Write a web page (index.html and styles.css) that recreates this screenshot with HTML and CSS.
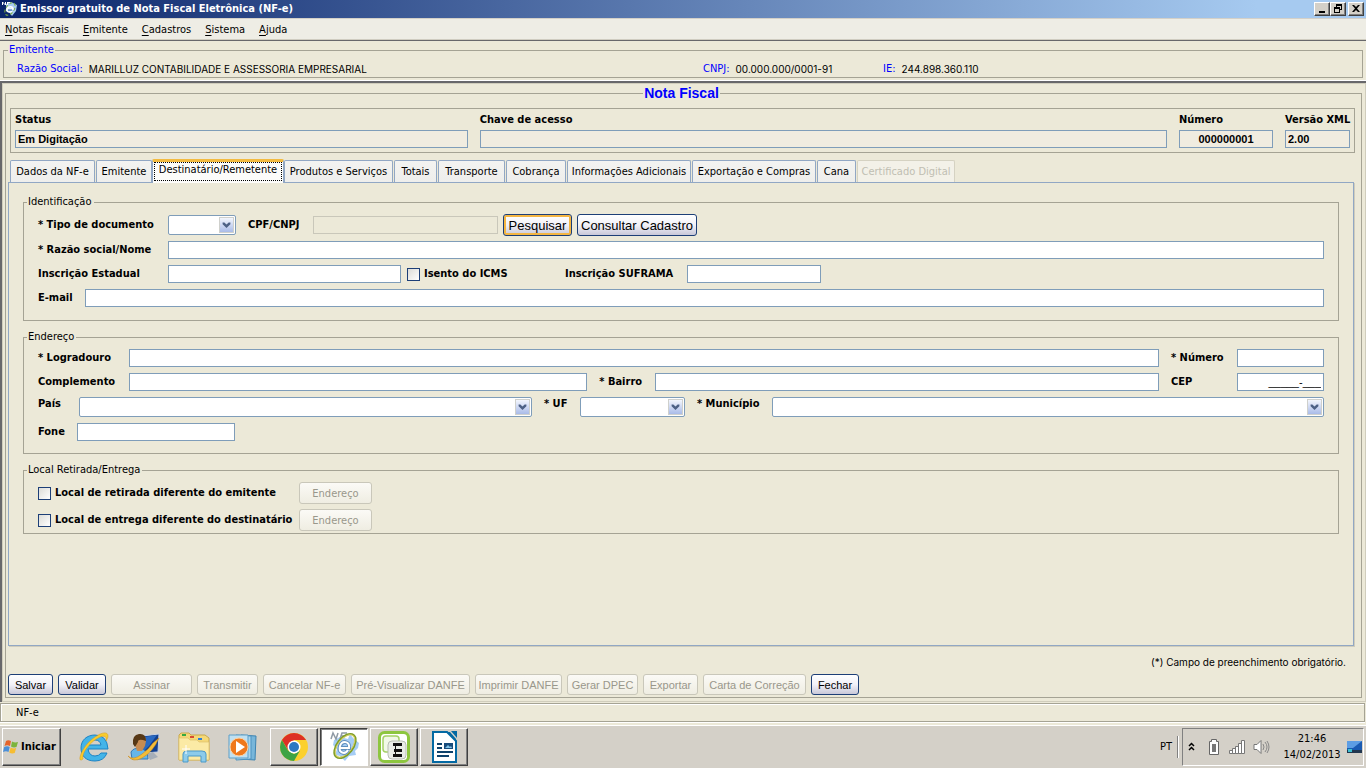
FILE: index.html
```html
<!DOCTYPE html>
<html lang="pt-BR">
<head>
<meta charset="utf-8">
<meta name="viewport" content="width=device-width, initial-scale=1">
<title>Emissor gratuito de Nota Fiscal Eletrônica (NF-e)</title>
<link rel="stylesheet" href="styles.css">
</head>
<body>
<svg class="defs" aria-hidden="true">
  <symbol id="chevron" viewBox="0 0 15 16"><path d="M3 5h2l2.500 2.500L10 5h2v2l-4.500 4.500L3 7z" fill="#4d6185"/></symbol>
</svg>

<header class="titlebar">
  <svg class="app-icon" viewBox="0 0 16 16" aria-hidden="true">
    <path d="M4 3l5-2 6 3-1 6-4 5-3-4-3-1z" fill="#a9cdf0"/>
    <path d="M0 1h1l2 2V1h1v3H3L1 2v2H0zM5 1h3v1H6v2H5z" fill="#fff"/>
    <ellipse cx="8" cy="8" rx="7" ry="4" fill="none" stroke="#7fae3f" stroke-dasharray="3 2" transform="rotate(-55 8 8)"/>
    <path d="M5 8h6c0-3-5-3-6 0s3 4 5 2" fill="none" stroke="#fff" stroke-width="1.500"/>
    <path d="M6 9h4" stroke="#2b5ea8"/>
  </svg>
  <h1 class="titlebar-text">Emissor gratuito de Nota Fiscal Eletrônica (NF-e)</h1>
  <div class="window-controls">
    <button type="button" aria-label="Minimizar"><svg viewBox="0 0 12 10"><path d="M3 7h6v2H3z"/></svg></button>
    <button type="button" aria-label="Restaurar"><svg viewBox="0 0 12 10"><path d="M4 0h6v6H8V5h1V2H5v1H4zM2 3h6v6H2zM3 5v3h4V5z" fill-rule="evenodd"/></svg></button>
    <button type="button" class="close" aria-label="Fechar janela"><svg viewBox="0 0 12 10"><path d="M2 1h2l2 2 2-2h2L7 4.500 10 8H8L6 6 4 8H2l3-3.500z"/></svg></button>
  </div>
</header>

<nav class="menubar" aria-label="Menu principal">
  <button type="button"><u>N</u>otas Fiscais</button>
  <button type="button"><u>E</u>mitente</button>
  <button type="button"><u>C</u>adastros</button>
  <button type="button"><u>S</u>istema</button>
  <button type="button"><u>A</u>juda</button>
</nav>

<section class="issuer">
  <fieldset class="group issuer-group">
    <legend>Emitente</legend>
    <dl class="issuer-data">
      <div class="issuer-name"><dt>Razão Social:</dt><dd>MARILLUZ CONTABILIDADE E ASSESSORIA EMPRESARIAL</dd></div>
      <div class="issuer-cnpj"><dt>CNPJ:</dt><dd>00.000.000/0001-91</dd></div>
      <div class="issuer-ie"><dt>IE:</dt><dd>244.898.360.110</dd></div>
    </dl>
  </fieldset>
</section>

<main class="workspace">
  <fieldset class="group invoice">
    <legend>Nota Fiscal</legend>

    <div class="summary">
      <div><label for="status">Status</label><input id="status" readonly value="Em Digitação"></div>
      <div><label for="chave">Chave de acesso</label><input id="chave" readonly></div>
      <div><label for="nf-numero">Número</label><input id="nf-numero" class="center" readonly value="000000001"></div>
      <div><label for="versao">Versão XML</label><input id="versao" readonly value="2.00"></div>
    </div>

    <div class="tabs" role="tablist">
      <button type="button" role="tab" class="tab-data">Dados da NF-e</button>
      <button type="button" role="tab" class="tab-issuer">Emitente</button>
      <button type="button" role="tab" aria-selected="true" class="selected"><span>Destinatário/Remetente</span></button>
      <button type="button" role="tab" class="tab-products">Produtos e Serviços</button>
      <button type="button" role="tab" class="tab-totals">Totais</button>
      <button type="button" role="tab" class="tab-transport">Transporte</button>
      <button type="button" role="tab" class="tab-billing">Cobrança</button>
      <button type="button" role="tab" class="tab-extra">Informações Adicionais</button>
      <button type="button" role="tab" class="tab-extra">Exportação e Compras</button>
      <button type="button" role="tab" class="tab-cane">Cana</button>
      <button type="button" role="tab" class="tab-cert" disabled>Certificado Digital</button>
    </div>

    <form class="panel" role="tabpanel">
      <fieldset class="group ident">
        <legend>Identificação</legend>
        <div class="row row-top">
          <label class="label-wide" for="tipo">* Tipo de documento</label>
          <span class="combo combo-type"><select id="tipo"><option></option></select><svg aria-hidden="true"><use href="#chevron"/></svg></span>
          <label class="label-cpf" for="cpf">CPF/CNPJ</label>
          <input id="cpf" class="cpf" disabled>
          <button type="button" class="btn btn-large btn-default">Pesquisar</button>
          <button type="button" class="btn btn-large btn-lookup">Consultar Cadastro</button>
        </div>
        <div class="row">
          <label class="label-wide" for="razao">* Razão social/Nome</label>
          <input id="razao" class="grow">
        </div>
        <div class="row">
          <label class="label-wide" for="ie">Inscrição Estadual</label>
          <input id="ie" class="state-reg">
          <label class="check check-icms"><input type="checkbox">Isento do ICMS</label>
          <label class="label-suframa" for="suframa">Inscrição SUFRAMA</label>
          <input id="suframa" class="suframa">
        </div>
        <div class="row">
          <label class="label-email" for="email">E-mail</label>
          <input id="email" class="grow" type="email">
        </div>
      </fieldset>

      <fieldset class="group address">
        <legend>Endereço</legend>
        <div class="row">
          <label class="label-street" for="logradouro">* Logradouro</label>
          <input id="logradouro" class="grow">
          <label class="label-number" for="numero">* Número</label>
          <input id="numero" class="short">
        </div>
        <div class="row">
          <label class="label-street" for="complemento">Complemento</label>
          <input id="complemento" class="complement">
          <label class="label-district" for="bairro">* Bairro</label>
          <input id="bairro" class="district">
          <label class="label-number" for="cep">CEP</label>
          <input id="cep" class="short cep" value="_____-___">
        </div>
        <div class="row row-combos">
          <label class="label-country" for="pais">País</label>
          <span class="combo combo-country"><select id="pais"><option></option></select><svg aria-hidden="true"><use href="#chevron"/></svg></span>
          <label class="label-uf" for="uf">* UF</label>
          <span class="combo combo-uf"><select id="uf"><option></option></select><svg aria-hidden="true"><use href="#chevron"/></svg></span>
          <label class="label-city" for="municipio">* Município</label>
          <span class="combo combo-city"><select id="municipio"><option></option></select><svg aria-hidden="true"><use href="#chevron"/></svg></span>
        </div>
        <div class="row">
          <label class="label-phone" for="fone">Fone</label>
          <input id="fone" class="phone" type="tel">
        </div>
      </fieldset>

      <fieldset class="group delivery">
        <legend>Local Retirada/Entrega</legend>
        <div class="row">
          <label class="check"><input type="checkbox">Local de retirada diferente do emitente</label>
          <button type="button" class="btn" disabled>Endereço</button>
        </div>
        <div class="row">
          <label class="check"><input type="checkbox">Local de entrega diferente do destinatário</label>
          <button type="button" class="btn" disabled>Endereço</button>
        </div>
      </fieldset>
    </form>

    <p class="required-note">(*) Campo de preenchimento obrigatório.</p>

    <div class="actions">
      <button type="button" class="btn w-save">Salvar</button>
      <button type="button" class="btn w-check">Validar</button>
      <button type="button" class="btn w-sign" disabled>Assinar</button>
      <button type="button" class="btn w-send" disabled>Transmitir</button>
      <button type="button" class="btn w-cancel" disabled>Cancelar NF-e</button>
      <button type="button" class="btn w-preview" disabled>Pré-Visualizar DANFE</button>
      <button type="button" class="btn w-print" disabled>Imprimir DANFE</button>
      <button type="button" class="btn w-dpec" disabled>Gerar DPEC</button>
      <button type="button" class="btn w-export" disabled>Exportar</button>
      <button type="button" class="btn w-letter" disabled>Carta de Correção</button>
      <button type="button" class="btn w-check">Fechar</button>
    </div>
  </fieldset>
</main>

<div class="statusbar">NF-e</div>

<footer class="taskbar">
  <button type="button" class="start">
    <svg viewBox="0 0 16 16" aria-hidden="true">
      <path d="M3 2q2-1.500 5 0L7 7Q4 5.500 1.500 7z" fill="#e5642b"/>
      <path d="M9 2.500q3 1.500 6 .5l-1.500 5q-3 1-5.500-.5z" fill="#7cb43c"/>
      <path d="M1.200 8q3-1.500 5.500 0l-1.200 5Q3 11.500 0 13z" fill="#4b8fd8"/>
      <path d="M7.700 8.500q3 1.500 5.500.5l-1.500 5q-3 1-5.500-.5z" fill="#f6bd32"/>
    </svg>Iniciar
  </button>

  <div class="quick">
    <button type="button" aria-label="Internet Explorer">
      <svg viewBox="0 0 32 32">
        <path d="M30 18H10q1 7 7 7 4 0 6-3h6q-3 8-12 8C8 30 3 25 3 17S9 4 17 4q12 0 13 14zM11 14h12q-1-5-6-5t-6 5z" fill="#43b4e8" stroke="#1d83c4" fill-rule="evenodd"/>
        <path d="M5 28C-1 33 2 20 11 11S30-1 30 5c0 2-1 3-2 5 1-4-1-6-6-4C13 10 3 22 5 28z" fill="#f8cb2d" stroke="#d99b17" stroke-width=".5"/>
      </svg>
    </button>
    <button type="button" aria-label="Central de usuários">
      <svg viewBox="0 0 32 32">
        <path d="M14 5l17-2-1 18-15 1z" fill="#123f8e" stroke="#c9d4e6"/>
        <path d="M16 6l13-2-8 11-6 6z" fill="#2969c2"/>
        <path d="M19 22l6-1 5 5-8 3z" fill="#a6aeb8"/>
        <path d="M3 21q3-5 9-3 8 0 8 10H4z" fill="#67b6e8" stroke="#3578b8"/>
        <path d="M6 11q0-6 6-7 6 0 6 6l-1 5-3 5H9z" fill="#c78b52"/>
        <path d="M5 13Q4 4 11 3q7-1 7 7-8-3-8 1l-3 5z" fill="#573816"/>
        <path d="M0 25q5 5 14-2 7-5 11-11l6-5q-6 14-17 20-9 5-14-2z" fill="#f5bd38" stroke="#ca8613" stroke-width=".5"/>
      </svg>
    </button>
    <button type="button" aria-label="Windows Explorer">
      <svg viewBox="0 0 32 32">
        <path d="M1 4l2-2h8l2 2h14l4 3v22H1z" fill="#f4d878" stroke="#c9a84b"/>
        <path d="M4 3h4v2H4z" fill="#35a943"/><path d="M12 5h4v2h-4z" fill="#d94b31"/><path d="M20 7h4v2h-4z" fill="#2f7ed8"/>
        <path d="M1 7h9l2 2h7l2 2h10v18H1z" fill="#fbeaa5" stroke="#dec16b" stroke-width=".7"/>
        <path d="M5 23q0-3 4-3h15q4 0 4 3v8h-5v-6H10v6H5z" fill="#8ccbea" stroke="#4b99c8"/>
        <path d="M8 14v9M4 18h8" stroke="#fff"/>
      </svg>
    </button>
    <button type="button" aria-label="Windows Media Player">
      <svg viewBox="0 0 32 32">
        <path d="M13 4l15 1-1 24-15-1z" fill="#78b6da" stroke="#3d83b1"/>
        <path d="M8 4l15 1v23l-15 1z" fill="#a7d3ec" stroke="#4c91bf"/>
        <path d="M1 4h19v23H1z" fill="#c0e0f1" stroke="#5d9fc8"/>
        <circle cx="11" cy="16" r="9" fill="#ef781c" stroke="#fbd3a6"/>
        <path d="M8 10l9 6-9 6z" fill="#fff"/>
      </svg>
    </button>
  </div>

  <div class="tasks">
    <button type="button" aria-label="Google Chrome">
      <svg viewBox="0 0 32 32">
        <circle cx="16" cy="16" r="14" fill="#fbd02c"/>
        <path d="M16 9h12.100A14 14 0 0 0 3.900 9L10 19z" fill="#dd3025"/>
        <path d="M3.900 9A14 14 0 0 0 16 30l6-10.500-6 3.500-6-3.500z" fill="#3da344"/>
        <circle cx="16" cy="16" r="6.500" fill="#fff"/><circle cx="16" cy="16" r="5" fill="#2d77c2"/>
      </svg>
    </button>
    <button type="button" class="active" aria-label="Emissor NF-e">
      <svg viewBox="0 0 32 32">
        <path d="M6 9l6-3 8 2 2-5 3 4 6 5-1 5-3 3 1 4-7 1-4 5-5-5-5-1 2-6-4-4z" fill="#a5cdf5"/>
        <path d="M3 8l2-6 3 6 2-6M12 8l2-6h5M13 5h4" stroke="#8f9aa5" stroke-width="1.500" fill="none"/>
        <ellipse cx="17" cy="15" rx="14" ry="8" transform="rotate(-52 17 15)" fill="none" stroke="#7f9e27" stroke-width="2"/>
        <ellipse cx="17" cy="15" rx="13" ry="7" transform="rotate(-52 17 15)" fill="none" stroke="#d7cf68"/>
        <path d="M11 17h10c1-7-7-8-9-2-2 7 5 9 8 4" fill="none" stroke="#608fbd" stroke-width="4"/>
        <path d="M11 17h10c1-7-7-8-9-2-2 7 5 9 8 4" fill="none" stroke="#fff" stroke-width="2"/>
      </svg>
    </button>
    <button type="button" aria-label="Emissor">
      <svg viewBox="0 0 32 32">
        <rect x="1.500" y="1.500" width="29" height="29" rx="5" fill="#fff" stroke="#8dc63f" stroke-width="3"/>
        <rect x="5" y="5" width="16" height="16" rx="3" fill="#f1f8e7" stroke="#a4d165" stroke-width="1.500"/>
        <rect x="10" y="10" width="18" height="18" rx="4" fill="#e9ece6" stroke="#b8bdb4"/>
        <path d="M15 12h9v3h-6v3h6v3h-6v2h6v3h-9v-3h2v-2h-1v-3h1v-3h-2z" fill="#111"/>
      </svg>
    </button>
    <button type="button" aria-label="LibreOffice Writer">
      <svg viewBox="0 0 32 32">
        <path d="M5 1h14l9 9v21H5z" fill="#fff" stroke="#0369a3" stroke-width="2"/>
        <path d="M19 1l9 9V8l-6-7zM23 0h6v7z" fill="#0369a3"/>
        <path d="M9 13h5M9 17h5M9 21h16M9 25h12" stroke="#0f426b" stroke-width="2"/>
        <path d="M16 12h9v6h-9z" fill="#184b7b"/><path d="M17 17l3-3 2 2 1-1 1 2z" fill="#83c4e8"/>
      </svg>
    </button>
  </div>

  <span class="lang">PT</span>
  <div class="tray">
    <svg class="tray-more" viewBox="0 0 7 9" aria-label="Mostrar ícones ocultos"><path d="M1 4l2.500-2.500L6 4M1 8l2.500-2.500L6 8" fill="none" stroke="#000" stroke-width="1.500"/></svg>
    <svg class="tray-battery" viewBox="0 0 12 16" aria-label="Bateria"><path d="M3.500 2.500v-2h5v2h2v13h-9v-13z" fill="#fff" stroke="#666"/><path d="M4 5h4v8H4z" fill="#777"/></svg>
    <svg class="tray-signal" viewBox="0 0 16 14" aria-label="Rede"><path d="M.5 10.500h3v3h-3zM3.500 8.500h3v5h-3zM6.500 6.500h3v7h-3zM9.500 3.500h3v10h-3zM12.500.5h3v13h-3z" fill="#fff" stroke="#777"/></svg>
    <svg class="tray-sound" viewBox="0 0 17 16" aria-label="Volume"><path d="M1 5.500h3l4-4v13l-4-4H1z" fill="#fff" stroke="#777"/><path d="M10 5q2 3 0 6M12 3q4 5 0 10M14 2q4 6 0 12" fill="none" stroke="#888"/></svg>
    <time class="clock" datetime="2013-02-14T21:46"><span>21:46</span><span>14/02/2013</span></time>
    <svg class="tray-desktop" viewBox="0 0 15 12" aria-label="Área de trabalho"><path d="M0 0h15v11H0z" fill="#195ab2"/><path d="M0 0h15L6 7H0z" fill="#5c9de4"/><path d="M0 9h15v3H0z" fill="#21364f"/><path d="M1 8h4v3H1z" fill="#3bc0d1"/></svg>
  </div>
</footer>
</body>
</html>
```
FILE: styles.css
```css
:root {
  --ui: "DejaVu Sans Condensed", "Noto Sans", sans-serif;
  --arial: "Liberation Sans", Arial, sans-serif;
  --small: Inter, "Liberation Sans", sans-serif;
  --face: #ece9d8;
  --field: #7f9db9;
  --line: #a5a394;
  --navy: #1d3f77;
}

* { box-sizing: border-box; }

body {
  margin: 0;
  min-height: 100vh;
  display: flex;
  flex-direction: column;
  background: var(--face);
  color: #000;
  font: 11px/14px var(--ui);
}

button, input, select { font: inherit; color: inherit; margin: 0; }
button { white-space: nowrap; }
label { white-space: nowrap; font-weight: bold; }
.defs { display: none; }

/* Title bar */
.titlebar {
  display: flex;
  align-items: center;
  height: 18px;
  padding: 0 2px;
  background: linear-gradient(90deg, #0a246a, #a6caf0 92%);
}
.app-icon { width: 16px; height: 16px; margin-right: 2px; }
.titlebar-text { flex: 1; margin: 0; font-size: 11px; color: #fff; }
.window-controls { display: flex; }
.window-controls button {
  width: 16px;
  height: 14px;
  padding: 0;
  border: 1px solid;
  border-color: #fff #404040 #404040 #fff;
  background: #d4d0c8;
  box-shadow: inset -1px -1px #808080;
}
.window-controls svg { display: block; width: 12px; height: 10px; margin-left: 1px; }
.window-controls .close { margin-left: 2px; }

/* Menu bar */
.menubar {
  display: flex;
  gap: 14px;
  height: 23px;
  padding: 0 5px;
  border-top: 1px solid #d4d0c8;
  border-bottom: 1px solid #68686b;
  background: #eeede5;
  box-shadow: inset 0 -1px #cfccc0;
}
.menubar button { padding: 0; border: 0; background: none; }
.menubar u { text-underline-offset: 2px; }

/* Group boxes */
.group { min-width: 0; margin: 0; border: 1px solid var(--line); padding: 0; }
.group legend { padding: 0 1px; margin-left: 4px; }

.issuer { padding: 2px 3px 3px; }
.issuer-group { height: 35px; }
.issuer-group legend { color: #00f; }
.issuer-data { display: flex; margin: 0; padding: 5px 13px 0; }
.issuer-data div { display: flex; gap: 6px; }
.issuer-data dt { color: #00f; }
.issuer-data dd { margin: 0; font: 10px/14px var(--small); }
.issuer-name { flex: 686 0 0; }
.issuer-cnpj { flex: 180 0 0; }
.issuer-ie { flex: 466 0 0; }

/* Workspace */
.workspace {
  flex: 1;
  display: flex;
  padding: 2px 4px 4px 2px;
  border-top: 2px solid #68686b;
  border-left: 2px solid #68686b;
  box-shadow: 0 -1px #fff, inset 1px 1px #d0cdbc, inset -1px -1px #d0cdbc;
}
.invoice {
  flex: 1;
  display: flex;
  flex-direction: column;
  margin: 0 0 0 1px;
  padding: 7px 6px 2px 2px;
}
.invoice > legend {
  margin: 0 auto;
  padding: 0 1px;
  color: #00f;
  font: bold 14px/16px var(--arial);
}

.summary {
  display: grid;
  grid-template-columns: 452fr 686fr 94px 65px;
  gap: 12px;
  margin-left: 2px;
  padding: 4px;
  border: 1px solid var(--line);
}
.summary label { display: block; margin-bottom: 3px; }

input:not([type="checkbox"]) {
  display: block;
  width: 100%;
  height: 18px;
  padding: 0 2px;
  border: 1px solid var(--field);
  border-radius: 0;
  background: #fff;
  font: 11px var(--arial);
}
.summary input:not([type="checkbox"]) { background: #f0ece0; font-weight: bold; }
.summary .center { text-align: center; }

/* Tabs */
.tabs { display: flex; align-items: flex-end; gap: 1px; height: 23px; margin: 6px 0 0 2px; }
.tabs button {
  flex: none;
  height: 22px;
  padding: 0;
  border: 1px solid #91a7c4;
  border-bottom: 0;
  border-radius: 2px 2px 0 0;
  background: linear-gradient(#f3f3f1, #eeeeec);
}
.tabs button:disabled { border-color: #d5d2c2; background: #f3f1e8; color: #c0beb2; }
.tabs .tab-data { width: 85px; }
.tabs .tab-issuer { width: 56px; }
.tabs .tab-products { width: 109px; }
.tabs .tab-totals { width: 43px; }
.tabs .tab-transport { width: 67px; }
.tabs .tab-billing { width: 60px; }
.tabs .tab-extra { width: 124px; }
.tabs .tab-cane { width: 39px; }
.tabs .tab-cert { width: 98px; }
.tabs .selected {
  z-index: 1;
  width: 132px;
  height: 24px;
  margin: 0 -1px -1px;
  padding: 0 1px 2px;
  border-top: 3px solid #f3bb40;
  background: #fcfcfa;
}
.tabs .selected span { display: block; height: 19px; border: 1px dotted #000; }

.panel {
  flex: 1;
  display: flex;
  flex-direction: column;
  gap: 9px;
  margin-right: 1px;
  padding: 12px 14px;
  border: 1px solid #91a7c4;
  box-shadow: 1px 1px #cfccbc;
}
.panel > .group > legend { padding: 0 2px 0 1px; }

/* Form rows */
.row { display: flex; align-items: center; margin-bottom: 6px; }
.row label { flex: none; }
.ident { height: 126px; padding: 5px 14px 0; }
.address { height: 124px; padding: 5px 14px 0; }
.delivery { height: 71px; padding: 5px 14px 0; }
.panel .group legend { margin-left: -11px; }

.row-top { margin-bottom: 5px; }
.row input:not([type="checkbox"]) { width: auto; min-width: 0; }
.row .grow { flex: 1; }

.label-wide { width: 130px; }
.label-cpf { width: 77px; padding-left: 12px; }
.label-email { width: 47px; }
.label-street { width: 91px; }
.label-number { width: 78px; padding-left: 12px; }
.label-district { width: 68px; padding-left: 12px; }
.label-country { width: 41px; }
.label-uf { width: 48px; padding-left: 12px; }
.label-city { width: 87px; padding-left: 12px; }
.label-phone { width: 39px; }
.row .label-suframa { width: 122px; margin-left: 55px; }

.row .cpf { flex: 0 0 185px; margin-right: 5px; border-color: #c9c7ba; background: #ece9d8; }
.row .state-reg { flex: 0 0 233px; }
.row .suframa { flex: 0 0 134px; }
.row .short { flex: 0 0 87px; }
.row .phone { flex: 0 0 158px; }
.row .complement { flex: 458 1 0; }
.row .district { flex: 504 1 0; }
.cep { text-align: right; }

.combo { position: relative; height: 20px; }
.combo select {
  display: block;
  width: 100%;
  height: 20px;
  border: 1px solid var(--field);
  border-radius: 2px;
  background: #fff;
  appearance: none;
}
.combo svg {
  position: absolute;
  top: 2px;
  right: 2px;
  width: 15px;
  height: 16px;
  border: 1px solid #cfd0cc;
  background: linear-gradient(#f3f6fd, #a9bbe8);
  pointer-events: none;
}
.combo-type { flex: 0 0 68px; }
.combo-country { flex: 453 1 0; }
.combo-uf { flex: 105 1 0; }
.combo-city { flex: 552 1 0; }
.row-combos { align-items: flex-start; }

.check { display: flex; align-items: center; gap: 4px; }
.check input {
  flex: none;
  width: 13px;
  height: 13px;
  border: 1px solid var(--navy);
  background: linear-gradient(135deg, #dcdcd7, #fff);
  appearance: none;
}
.check-icms { width: 103px; margin-left: 6px; }
.delivery .check { width: 261px; }
.delivery .row { margin-bottom: 5px; }
.delivery .btn { width: 73px; font: 11px var(--ui); }

/* Buttons */
.btn {
  height: 22px;
  padding: 0;
  border: 1px solid var(--navy);
  border-radius: 3px;
  background: linear-gradient(#fff, #f1f1f8 50%, #c9c8d8);
  font: 11px var(--arial);
}
.btn:disabled { border-color: #c9c7ba; background: linear-gradient(#fbfaf6, #efede2); color: #99978b; }
.btn-large { font-size: 13px; }
.btn-default { width: 69px; margin-right: 5px; box-shadow: inset 0 0 0 2px #f5b642; }
.btn-lookup { width: 120px; }

.required-note { margin: 9px 9px 5px; text-align: right; font: 10px/14px var(--small); }
.actions { display: flex; gap: 5px; }
.actions .btn { flex: none; height: 21px; }
.w-save { width: 45px; }
.w-check { width: 48px; }
.w-sign { width: 81px; }
.w-send { width: 61px; }
.w-cancel { width: 83px; }
.w-preview { width: 119px; }
.w-print { width: 87px; }
.w-dpec { width: 71px; }
.w-export { width: 55px; }
.w-letter { width: 103px; }

/* Status bar */
.statusbar {
  height: 19px;
  margin: 1px 1px 3px 0;
  padding: 2px 15px;
  border: 1px solid var(--line);
  box-shadow: inset 1px 1px #fff, 0 1px #fff;
}

/* Taskbar */
.taskbar {
  display: flex;
  align-items: center;
  height: 43px;
  padding: 1px 2px 2px;
  border-top: 1px solid #fff;
  background: #d4d0c8;
}
.taskbar button { padding: 0; border: 0; background: none; }
.taskbar .start {
  display: flex;
  align-items: center;
  gap: 2px;
  width: 59px;
  height: 38px;
  font-weight: bold;
}
.start svg { width: 16px; height: 16px; }
.taskbar .start, .taskbar .tasks button {
  border: 1px solid;
  border-color: #fff #404040 #404040 #fff;
  box-shadow: inset -1px -1px #808080;
}
.quick { display: flex; gap: 18px; margin-left: 17px; }
.quick button, .quick svg, .tasks svg { display: block; width: 32px; height: 32px; }
.tasks { display: flex; gap: 2px; margin-left: 10px; }
.taskbar .tasks button { display: grid; place-items: center; width: 48px; height: 38px; }
.taskbar .tasks .active {
  border-color: #404040 #fff #fff #404040;
  background: #fff;
  box-shadow: inset 1px 1px #808080;
}
.lang { margin-left: auto; padding: 4px 5px 4px 0; border-right: 1px solid #808080; box-shadow: 1px 0 #fff; }
.tray {
  display: flex;
  align-items: center;
  height: 38px;
  margin-left: 4px;
  padding-left: 5px;
  border: 1px solid;
  border-color: #808080 #fff #fff #808080;
}
.tray-more { width: 7px; height: 9px; }
.tray-battery { width: 12px; height: 16px; margin-left: 13px; }
.tray-signal { width: 16px; height: 14px; margin-left: 9px; }
.tray-sound { width: 17px; height: 16px; margin-left: 8px; }
.clock { display: grid; gap: 2px; width: 60px; margin-left: 12px; text-align: center; }
.tray-desktop { width: 15px; height: 12px; margin: 0 1px 0 5px; }
```
